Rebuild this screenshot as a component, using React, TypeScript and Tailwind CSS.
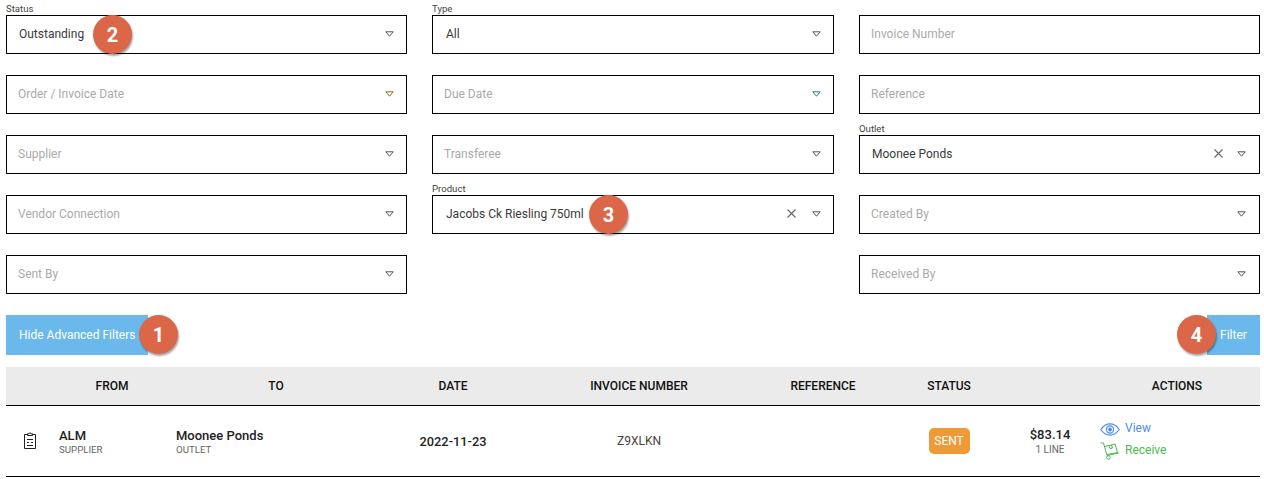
import React from 'react'

const Caret = ({ stroke = '#555' }: { stroke?: string }) => (
  <svg width="9" height="6" viewBox="0 0 9 6" className="shrink-0">
    <path d="M0.8 0.8H8.2L4.5 5.2Z" fill="none" stroke={stroke} strokeWidth="1" />
  </svg>
)

const Clear = () => (
  <svg width="9" height="9" viewBox="0 0 9 9" className="shrink-0">
    <path d="M0.5 0.5L8.5 8.5M8.5 0.5L0.5 8.5" stroke="#666" strokeWidth="1.1" />
  </svg>
)

const Marker = ({ n, className }: { n: number; className: string }) => (
  <span
    className={`absolute flex h-[39px] w-[39px] items-center justify-center rounded-full bg-[#dc6648] text-[20px] font-bold text-white shadow-[1px_2px_2px_rgba(0,0,0,0.35)] ${className}`}
  >
    {n}
  </span>
)

interface FieldProps {
  label?: string
  value?: string
  placeholder?: string
  caret?: string
  clearable?: boolean
  marker?: number
  markerClass?: string
  textOnly?: boolean
  inset?: string
  valueInset?: string
  clearGap?: string
}

function Field({
  label,
  value,
  placeholder,
  caret,
  clearable,
  marker,
  markerClass,
  textOnly,
  inset = 'pr-[12px]',
  valueInset = 'pl-[12px]',
  clearGap = 'mr-[14px]',
}: FieldProps) {
  return (
    <div>
      <div className="h-[15px] pt-[3px] text-[9.6px] leading-[12px] text-[#444]">{label}</div>
      <div
        className={`relative flex h-[39px] items-center border border-black pb-[2px] text-[12px] ${
          value ? 'text-[#3a3a3a]' : 'text-[#aaa]'
        } ${inset}`}
      >
        <span className={`flex-1 ${value ? valueInset : 'pl-[11px]'}`}>{value || placeholder}</span>
        {clearable && <span className={`flex ${clearGap}`}><Clear /></span>}
        {!textOnly && <Caret stroke={caret} />}
        {marker && <Marker n={marker} className={markerClass || ''} />}
      </div>
    </div>
  )
}

const tableCols = 'grid grid-cols-[48px_116px_212px_142px_230px_138px_114px_88px_166px]'

export default function App() {
  return (
    <div className="h-[479px] w-[1264px] overflow-hidden bg-white pl-[6px] pr-[4px] font-['Roboto',sans-serif]">
      <div className="grid grid-cols-[401px_402px_401px] gap-x-[25px] gap-y-[6px]">
        <Field label="Status" value="Outstanding" marker={2} markerClass="left-[86px] top-[-1px]" />
        <Field label="Type" value="All" valueInset="pl-[13px]" />
        <Field placeholder="Invoice Number" textOnly />

        <Field placeholder="Order / Invoice Date" caret="#8a6a1f" />
        <Field placeholder="Due Date" caret="#1f7a9a" />
        <Field placeholder="Reference" textOnly />

        <Field placeholder="Supplier" />
        <Field placeholder="Transferee" />
        <Field label="Outlet" value="Moonee Ponds" clearable inset="pr-[13px]" />

        <Field placeholder="Vendor Connection" />
        <Field
          label="Product"
          value="Jacobs Ck Riesling 750ml"
          clearable
          marker={3}
          markerClass="left-[156px] top-[-1px]"
          valueInset="pl-[13px]"
          clearGap="mr-[16px]"
        />
        <Field placeholder="Created By" inset="pr-[13px]" />

        <Field placeholder="Sent By" />
        <div />
        <Field placeholder="Received By" inset="pr-[13px]" />
      </div>

      <div className="mt-[21px] flex h-[40px] justify-between text-[12px] text-white">
        <div className="relative">
          <button className="flex h-full w-[142px] items-center bg-[#6bb9ec] pl-[13px]">Hide Advanced Filters</button>
          <Marker n={1} className="left-[133px] top-0" />
        </div>
        <div className="relative">
          <button className="flex h-full w-[53px] items-center bg-[#6bb9ec] pl-[13px]">Filter</button>
          <Marker n={4} className="left-[-30px] top-0" />
        </div>
      </div>

      <div className={`${tableCols} mt-[12px] h-[39px] items-center border-b border-black bg-[#ebebeb] text-center text-[12px] font-medium text-[#111]`}>
        <div />
        <div>FROM</div>
        <div>TO</div>
        <div>DATE</div>
        <div>INVOICE NUMBER</div>
        <div>REFERENCE</div>
        <div>STATUS</div>
        <div />
        <div>ACTIONS</div>
      </div>

      <div className={`${tableCols} h-[71px] items-center border-b border-black text-[#222]`}>
        <div className="flex justify-center">
          <svg width="14" height="18" viewBox="0 0 14 18" fill="none" stroke="#222" strokeWidth="1">
            <path d="M4.5 2.5H1.5V16.5H12.5V2.5H9.5" />
            <path d="M4.5 3.5V1.8H6A1 1 0 0 1 8 1.8H9.5V3.5Z" />
            <path d="M4 7.5H10M4 10.5H6M8 10.5H10M4 13.5H10" />
          </svg>
        </div>
        <div className="pl-[5px]">
          <div className="text-[13px] font-medium leading-[15px]">ALM</div>
          <div className="mt-[1px] text-[9.7px] leading-[11px] text-[#666]">SUPPLIER</div>
        </div>
        <div className="pl-[6px]">
          <div className="text-[13px] font-medium leading-[15px]">Moonee Ponds</div>
          <div className="mt-[1px] text-[9.7px] leading-[11px] text-[#666]">OUTLET</div>
        </div>
        <div className="pt-[2px] text-center text-[12.8px] font-medium">2022-11-23</div>
        <div className="text-center text-[12px] text-[#444]">Z9XLKN</div>
        <div />
        <div className="flex justify-center">
          <span className="flex h-[26px] w-[41px] items-center justify-center rounded-[5px] bg-[#f09a37] text-[12px] text-white">SENT</span>
        </div>
        <div className="text-center">
          <div className="text-[13px] font-medium leading-[14px]">$83.14</div>
          <div className="mt-[2px] text-[10px] leading-[11px] text-[#666]">1 LINE</div>
        </div>
        <div className="mb-[3px] pl-[6px] text-[12px]">
          <div className="flex h-[20px] items-center text-[#4a8cf0]">
            <svg width="20" height="13" viewBox="0 0 20 13" fill="none" stroke="#4a8cf0" className="mr-[5px]">
              <path d="M0.8 6.5C4 1.8 7 0.8 10 0.8S16 1.8 19.2 6.5C16 11.2 13 12.2 10 12.2S4 11.2 0.8 6.5Z" strokeWidth="1.2" />
              <circle cx="10" cy="6.5" r="3.6" strokeWidth="1.2" />
              <circle cx="10" cy="6.5" r="1.9" fill="#4a8cf0" stroke="none" />
            </svg>
            <span className="-mt-[2px]">View</span>
          </div>
          <div className="flex h-[21px] items-center text-[#4cbb4c]">
            <svg width="20" height="18" viewBox="0 0 20 18" fill="none" stroke="#4cbb4c" strokeWidth="1" className="mr-[5px] mt-[3px]">
              <path d="M0.5 1H3.5L7 13.5L19 11" />
              <path d="M5 4.5L15 2L17.5 10.5L7 12.5" />
              <path d="M9 3.5L10 6.5L12.5 6L11.5 3" />
              <circle cx="8.5" cy="15.5" r="1.8" />
            </svg>
            <span className="mt-[1px]">Receive</span>
          </div>
        </div>
      </div>
    </div>
  )
}
